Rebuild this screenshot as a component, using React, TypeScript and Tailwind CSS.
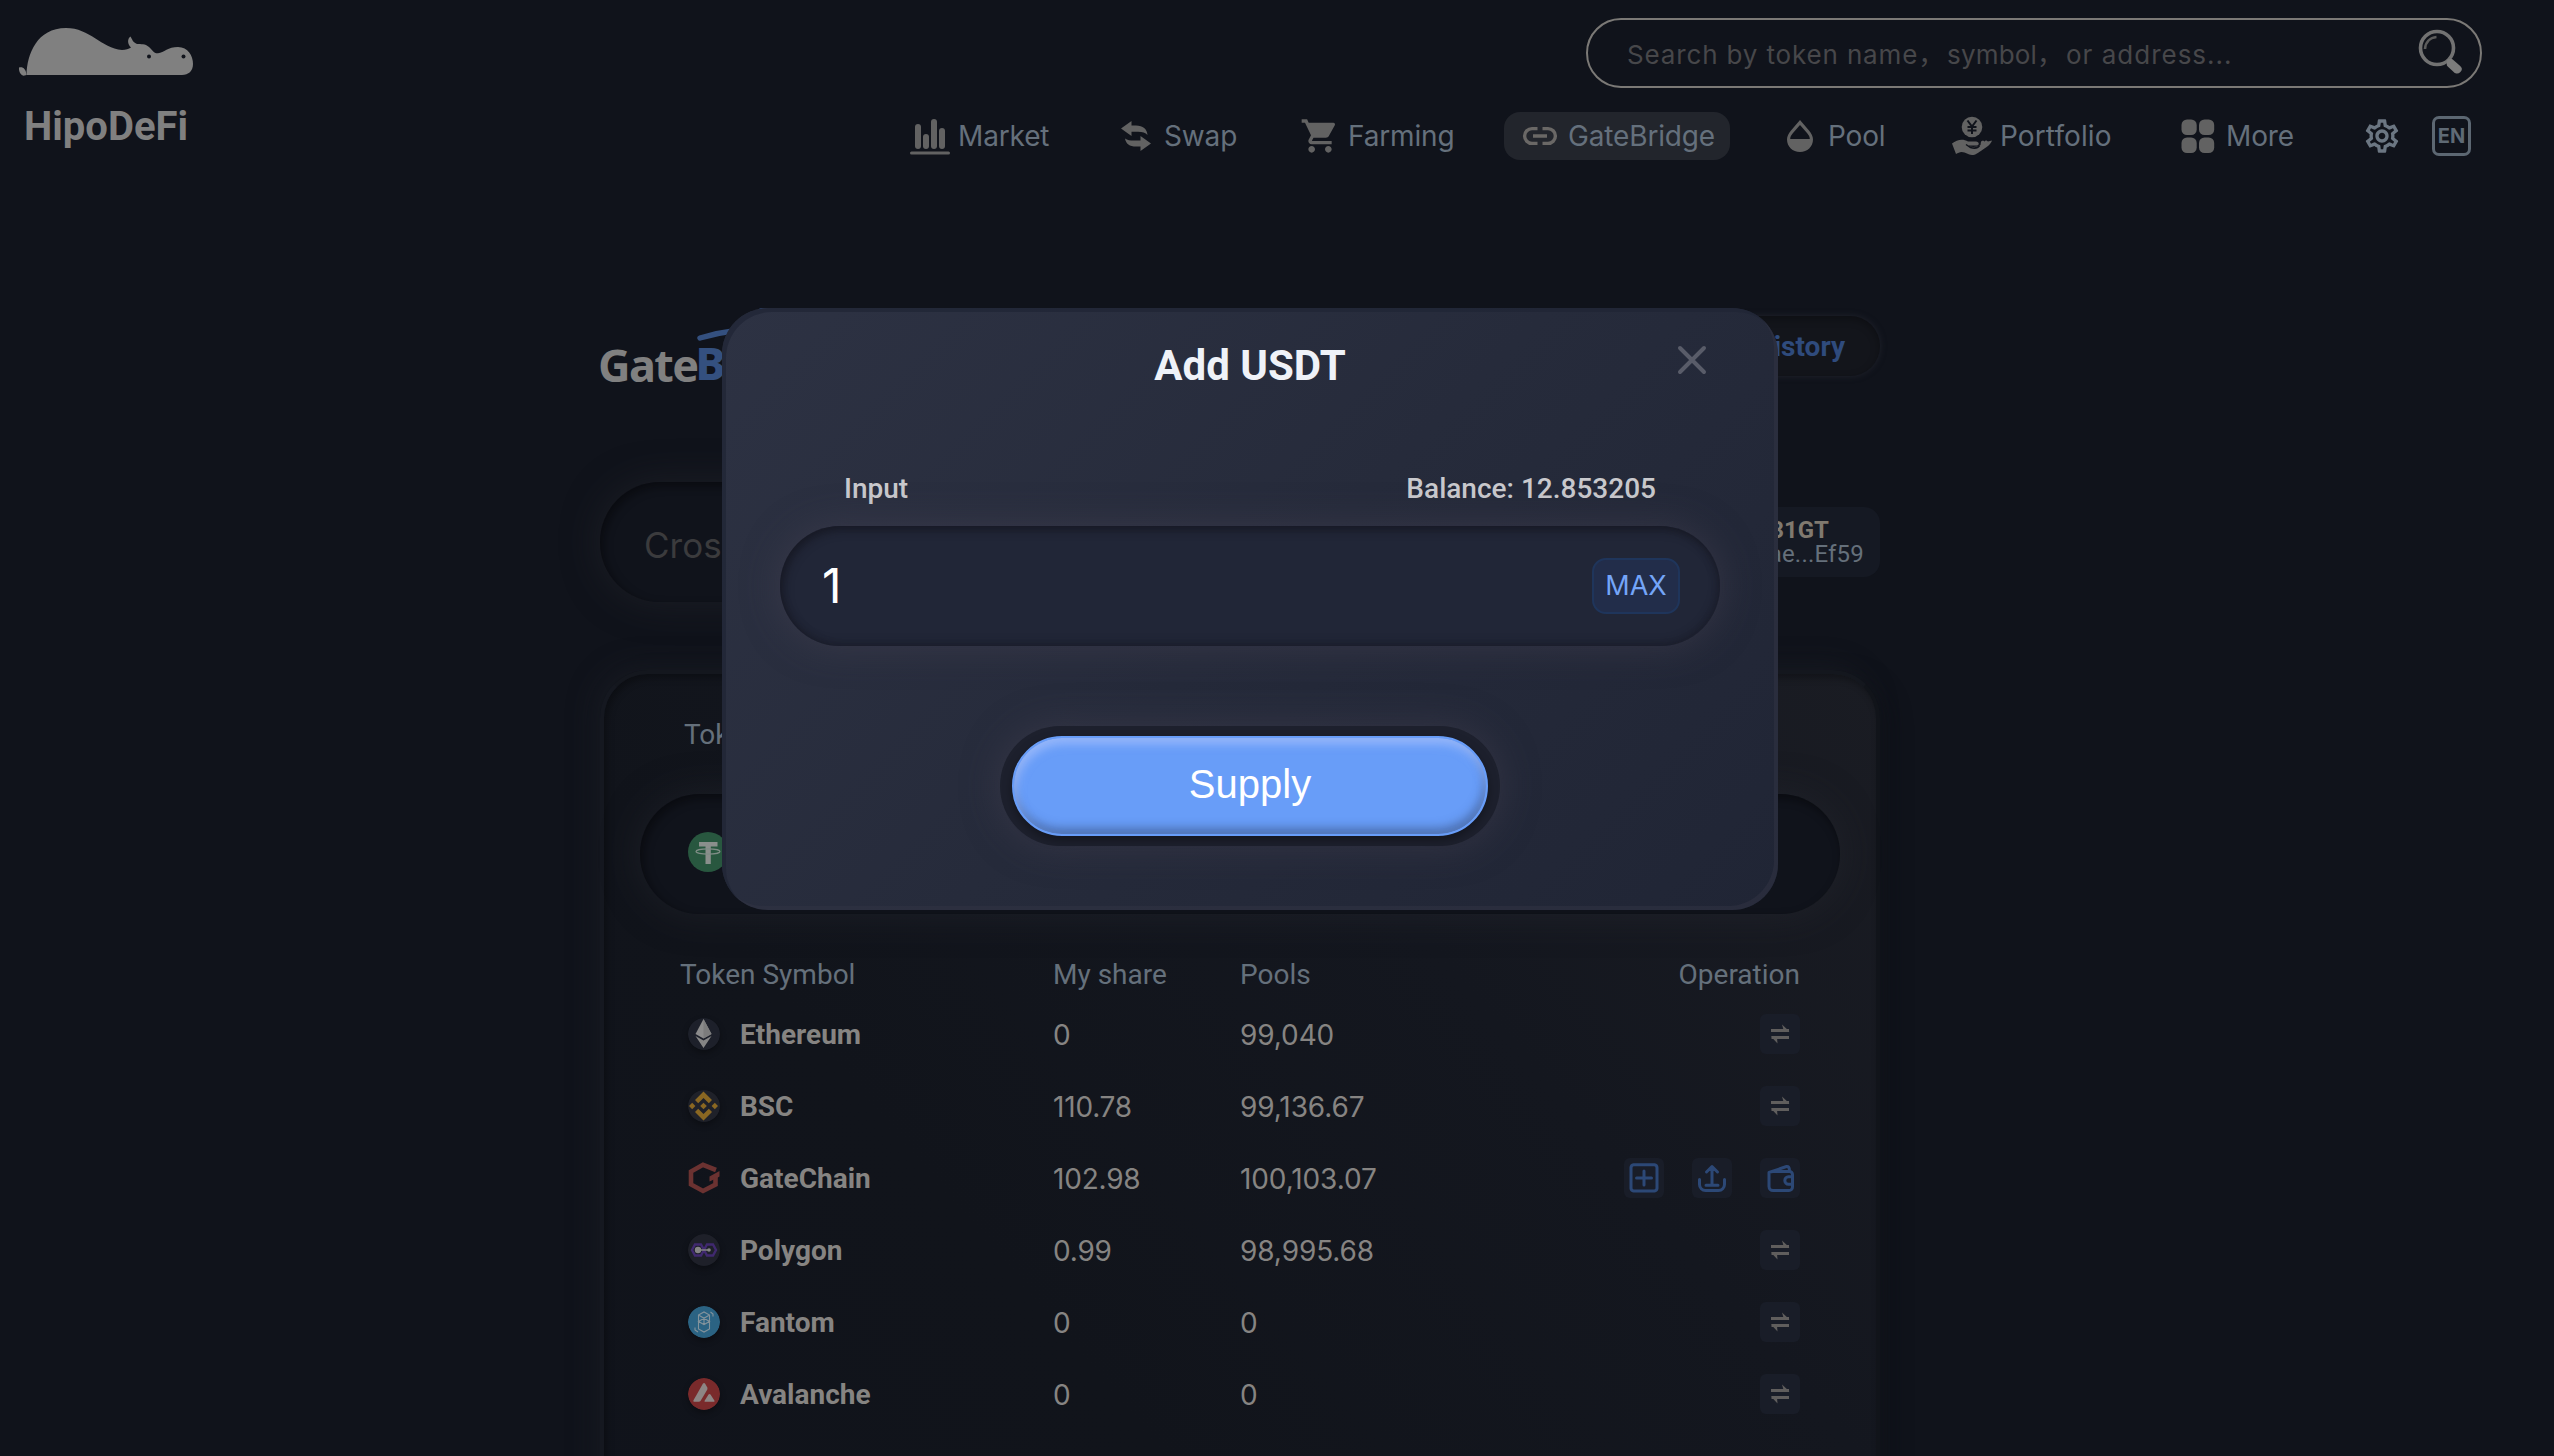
import React from "react";
import { MdShoppingCart, MdOutlineSettings } from "react-icons/md";

const INTER = "font-['Inter','Noto_Sans_CJK_SC',sans-serif]";
const ARIAL = "font-['Liberation_Sans',sans-serif]";

/* ---------- brand ---------- */

function HippoLogo() {
  return (
    <svg className="block h-[50px] w-[176px]" viewBox="18 27 176 50" fill="#808080">
      <path d="M26.5 75C27 54 37 28 66 28C90 28 101 48 122 50C126 50 128.500 49 131 47.500C127.500 44 127 39 130.500 36.500C132 39 133 42.500 137 44C141 44.300 145 43.500 149 47C152 49.500 153.500 53.500 158 53.300C164 52.500 168 47 178 47C188 47 193 56 193 64C193 71 188.500 75 182 75Z" />
      <path d="M19 67.500C22.500 66.300 26 68.500 26.500 75L23.500 75.800C20 74.500 18.700 71 19 67.500Z" />
      <circle cx="149" cy="56.600" r="2" fill="#10131b" />
      <circle cx="183.500" cy="56.600" r="2" fill="#10131b" />
    </svg>
  );
}

function GateBridgeLogo() {
  return (
    <div className="relative h-[78px] w-[260px]">
      <div className="flex items-start pt-[19px] font-['Noto_Sans',sans-serif] text-[45px] font-bold leading-[60px] text-[#808080]">
        <span className="-ml-[2px] w-[99.500px] tracking-[-1.600px]">Gate</span>
        <span className="-mt-[2px] -ml-[2px] font-extrabold tracking-[-1.600px] text-[#34507f]">Bridge</span>
      </div>
      <svg className="absolute left-[90px] -top-4 h-[48px] w-[140px]" viewBox="690 300 140 48" fill="none" stroke="#34507f" strokeWidth="5.500" strokeLinecap="round">
        <path d="M700 338Q716 333 733 331M761 311H768" />
      </svg>
    </div>
  );
}

/* ---------- navigation icons ---------- */

const NAV_ICON = "block h-10 w-10 shrink-0";

const MarketIcon = () => (
  <svg className={NAV_ICON} viewBox="0 0 40 40" fill="#626262">
    <rect x="5" y="8" width="6" height="25" rx="3" />
    <rect x="13" y="18" width="6" height="15" rx="3" />
    <rect x="21" y="3" width="6" height="30" rx="3" />
    <rect x="29" y="12" width="6" height="21" rx="3" />
    <rect x="0" y="35.500" width="40" height="3" rx="1.500" />
  </svg>
);

const SwapIcon = () => (
  <svg className={NAV_ICON} viewBox="0 0 40 40" fill="#626262">
    <path d="M5 12.500L15.500 5V9.500H20C27 9.500 31 13 31.500 19C29.500 16.500 26.500 15.800 22 15.800H15.500V20Z" />
    <path d="M35 27.500L24.500 35V30.500H20C13.500 30.500 10 28 9 22.500C11.500 24.300 14 24.500 18 24.500H24.500V20Z" />
  </svg>
);

const FarmingIcon = () => <MdShoppingCart className={NAV_ICON} color="#626262" />;

const BridgeIcon = () => (
  <svg className={NAV_ICON} viewBox="0 0 40 40" fill="none" stroke="#6a6866" strokeWidth="3.400">
    <path d="M17.500 12.600H12A7.400 7.400 0 0 0 12 27.400H17.500M22.500 12.600H28A7.400 7.400 0 0 1 28 27.400H22.500M13 20H27" />
  </svg>
);

const PoolIcon = () => (
  <svg className={NAV_ICON} viewBox="0 0 40 40">
    <path fillRule="evenodd" fill="#626262" d="M20 4L29 14.500C31.500 17.500 33 20.300 33 23.500C33 30.500 27.300 36 20 36S7 30.500 7 23.500C7 20.300 8.500 17.500 11 14.500ZM20 9L13 17C11 19.300 10.300 21 10.200 23H29.800C29.700 21 29 19.300 27 17Z" />
  </svg>
);

const PortfolioIcon = () => (
  <svg className={NAV_ICON} viewBox="0 0 40 40">
    <circle cx="20" cy="11" r="10.300" fill="#626262" />
    <path d="M15.500 4.500L20 10.500L24.500 4.500M20 10.500V18M15.500 11H24.500M15.500 14.500H24.500" stroke="#10131b" strokeWidth="2" fill="none" />
    <path fill="#626262" d="M0 27.500C5 23.500 11 22.500 16 25.500H24C27.500 26 27.500 29 25 29.500H17V30.500C21 31.500 26 31 28.500 29L29 25.500L31 24.500L32.500 25.500L34 24.300L36 25.500L40 24.500C39 28 35 31 31 33.500C26 37 23.500 39 20 39C16 39 14 36 9.500 36C7.500 36 6 37 4 38Z" />
    <path d="M14 28.500L18.500 31.500C22 32.500 26 32 27.500 29.500" stroke="#10131b" strokeWidth="1.500" fill="none" />
  </svg>
);

const MoreIcon = () => (
  <svg className={NAV_ICON} viewBox="0 0 40 40" fill="#626262">
    <rect x="3.500" y="3.500" width="15.200" height="15.500" rx="5.500" />
    <rect x="21" y="3.500" width="15.200" height="15.500" rx="5.500" />
    <rect x="3.500" y="21.500" width="15.200" height="15.500" rx="5.500" />
    <rect x="21" y="21.500" width="15.200" height="15.500" rx="5.500" />
  </svg>
);

const NAV = [
  { label: "Market", Icon: MarketIcon, box: "w-[170px]" },
  { label: "Swap", Icon: SwapIcon, box: "w-[148px]" },
  { label: "Farming", Icon: FarmingIcon, box: "w-[184px]" },
  { label: "GateBridge", Icon: BridgeIcon, box: "w-[226px] -mr-[2px] bg-[#22252c]" },
  { label: "Pool", Icon: PoolIcon, box: "w-[136px]" },
  { label: "Portfolio", Icon: PortfolioIcon, box: "w-[190px] tracking-[0.100px]" },
  { label: "More", Icon: MoreIcon, box: "w-[146px]" },
];

function Header() {
  return (
    <header className="flex h-[300px] items-start justify-between pl-[18px] pr-[72px]">
      <div className="pt-[27px]">
        <HippoLogo />
        <div className="mt-6 pl-[6px] text-[40px] font-bold leading-[52px] text-[#808080]">HipoDeFi</div>
      </div>
      <div className="flex flex-col items-end pt-[18px]">
        <div className={`flex h-[70px] w-[896px] items-center rounded-full border-2 border-[#7b7976] pl-[39px] pr-[17px] ${INTER}`}>
          <div className="flex flex-1 pt-[3px] text-[26px] leading-9 text-[#47474a]">
            <span className="w-[320px] tracking-[0.850px]">Search by token name，</span>
            <span className="w-[119px] tracking-[0.200px]">symbol，</span>
            <span className="tracking-[1px]">or address...</span>
          </div>
          <svg className="-mt-1 block h-[46px] w-[46px]" viewBox="0 0 46 46" fill="none">
            <circle cx="20" cy="20" r="16.500" stroke="#727272" strokeWidth="3.600" />
            <path d="M8 21C8.500 14 13 9.500 19.500 9" stroke="#5c5c5c" strokeWidth="2.600" />
            <path d="M32 33.500L34 33L42 40C43.500 41.500 41 44 39 43L32 36.500Z" stroke="#7c7c7c" strokeWidth="4.500" strokeLinejoin="round" fill="#7c7c7c" />
          </svg>
        </div>
        <nav className={`mt-6 flex items-center text-[28px] leading-[46px] text-[#65707c] ${INTER}`}>
          <div className="mr-[54px] flex gap-9 tracking-[-0.150px]">
            {NAV.map(({ label, Icon, box }) => (
              <div key={label} className={`flex h-12 items-center gap-2 rounded-2xl pl-4 ${box}`}>
                <Icon />
                <span>{label}</span>
              </div>
            ))}
          </div>
          <MdOutlineSettings className="h-[40px] w-[40px]" color="#6b7682" />
          <div className="ml-[30px] mr-[11px] flex h-[40px] w-[39px] items-center justify-center rounded-[7px] border-[3.500px] border-[#5c6772] text-[20px] font-bold leading-none text-[#5f6a75]">EN</div>
        </nav>
      </div>
    </header>
  );
}

/* ---------- token icons ---------- */

const COIN = "block h-8 w-8 shrink-0 rounded-full shadow-[0_3px_6px_rgba(0,0,0,0.300)]";

const Ethereum = () => (
  <svg className={COIN} viewBox="0 0 32 32">
    <circle cx="16" cy="16" r="16" fill="#1d202a" />
    <path d="M15.500 1L7.500 16L15.500 20.500L23.500 16Z" fill="#8b8b8b" />
    <path d="M15.500 1V20.500L23.500 16Z" fill="#7c7c7c" />
    <path d="M7.500 18L15.500 22.500L23.500 18L15.500 30Z" fill="#858585" />
  </svg>
);
const Bsc = () => (
  <svg className={COIN} viewBox="0 0 32 32">
    <circle cx="16" cy="16" r="16" fill="#1f2129" />
    <g fill="#8a6722">
      <path d="M15.500 1.500L24 10L20.800 13.200L15.500 8L10.200 13.200L7 10Z" />
      <path d="M15.500 30.500L24 22L20.800 18.800L15.500 24L10.200 18.800L7 22Z" />
      <path d="M15.500 12.700L18.800 16L15.500 19.300L12.200 16Z" />
      <path d="M4.200 12.800L7.400 16L4.200 19.200L1 16Z" />
      <path d="M26.800 12.800L30 16L26.800 19.200L23.600 16Z" />
    </g>
  </svg>
);
const GateChain = () => (
  <svg className="block h-8 w-8 shrink-0" viewBox="0 0 32 32" fill="none" stroke="#6b3231" strokeWidth="4.600">
    <path d="M28 8L15 2.800L3 9.500V22.500L15 29L27.500 22.500V13.500" />
    <path d="M21.500 14.500L31.500 9V14.500L27 17L21.500 19.500Z" fill="#6b3231" stroke="none" />
  </svg>
);
const Polygon = () => (
  <svg className={COIN} viewBox="0 0 32 32" fill="none">
    <circle cx="16" cy="16" r="16" fill="#1e2029" />
    <path d="M7 10.500H13L16 16L13 21.500H7L4 16ZM19 10.500H25L28 16L25 21.500H19L16 16Z" stroke="#40296f" strokeWidth="2.400" />
    <circle cx="10" cy="16" r="3.200" fill="#858585" />
    <path d="M10 16H20" stroke="#858585" strokeWidth="1.300" />
    <circle cx="21" cy="16" r="1.800" fill="#858585" />
  </svg>
);
const Fantom = () => (
  <svg className={COIN} viewBox="0 0 32 32" fill="none">
    <circle cx="16" cy="16" r="16" fill="#2b6383" />
    <path d="M10.500 9L16 6L21.500 9V23L16 26L10.500 23ZM10.500 9L21.500 15.500L16 18.500L10.500 15.500L21.500 9M16 12V18.500M10.500 15.500V20M21.500 15.500V20M22.500 6L25 8V10.500M7 21.500V24L10 26" stroke="#83939c" strokeWidth="1.100" />
  </svg>
);
const Avalanche = () => (
  <svg className={COIN} viewBox="0 0 32 32">
    <circle cx="16" cy="16" r="16" fill="#7a2a2b" />
    <path d="M15 5.500C15.700 4.800 16.500 4.800 17 5.500L19.300 9.500C19.600 10.300 19.500 11 19.200 11.700L12.500 23C12 23.600 11.500 23.800 10.800 23.800H6C5.300 23.600 5.200 23 5.500 22.300Z" fill="#8d8584" />
    <path d="M20.500 16.500C21 15.700 22 15.700 22.500 16.500L26.500 22.800C26.700 23.400 26.300 23.800 25.700 23.800H17.300C16.700 23.800 16.300 23.400 16.600 22.800Z" fill="#8d8584" />
  </svg>
);
const Tether = () => (
  <svg className="-mt-1 block h-10 w-10 shrink-0" viewBox="0 0 40 40">
    <circle cx="20" cy="20" r="20" fill="#28573f" />
    <path d="M11 10H29.500V14.500H22.800V32H17.500V14.500H11Z" fill="#8a8f8c" />
    <ellipse cx="20" cy="19.500" rx="12" ry="2.600" fill="none" stroke="#7f8d86" strokeWidth="1.200" />
  </svg>
);

/* ---------- operations ---------- */

function OpButton({ children }: { children: React.ReactNode }) {
  return <span className="flex h-10 w-10 items-center justify-center rounded-md bg-[#191d28]">{children}</span>;
}
const SwapOp = () => (
  <OpButton>
    <svg className="block h-10 w-10" viewBox="0 0 40 40" fill="none" stroke="#605e5d" strokeWidth="2.800">
      <path d="M11 16.500H29M29 23.500H11.500" />
      <path d="M22 10.500L29.500 17.500H24ZM11 22.500L17.500 29.500L17 23.500Z" fill="#605e5d" stroke="none" />
    </svg>
  </OpButton>
);
const BlueOp = ({ d }: { d: string }) => (
  <OpButton>
    <svg className="block h-10 w-10" viewBox="0 0 40 40" fill="none" stroke="#2c4876" strokeWidth="3" strokeLinecap="round" strokeLinejoin="round">
      <path d={d} />
    </svg>
  </OpButton>
);

const ROWS = [
  { name: "Ethereum", share: "0", pools: "99,040", Icon: Ethereum },
  { name: "BSC", share: "110.78", pools: "99,136.67", Icon: Bsc },
  { name: "GateChain", share: "102.98", pools: "100,103.07", Icon: GateChain, own: true },
  { name: "Polygon", share: "0.99", pools: "98,995.68", Icon: Polygon },
  { name: "Fantom", share: "0", pools: "0", Icon: Fantom },
  { name: "Avalanche", share: "0", pools: "0", Icon: Avalanche },
];

const GRID = "grid grid-cols-[373px_187px_1fr_auto] items-center";

function BridgePage() {
  return (
    <main className="ml-[600px] w-[1280px]">
      <div className="mt-4 flex h-[60px] items-start justify-between">
        <GateBridgeLogo />
        <div className="flex h-[60px] items-center rounded-full bg-[#13151b] px-[35px] text-[28px] font-bold text-[#2f4b7d] shadow-[inset_0_3px_8px_rgba(0,0,0,0.300),0_0_6px_rgba(40,43,52,0.700)]">
          <span className="pt-px">History</span>
        </div>
      </div>

      <div className="mt-[106px] flex h-[120px] items-center justify-between">
        <div className={`flex h-[120px] w-[900px] items-center rounded-full bg-[#10131b] pl-11 pt-[6px] text-[35px] text-[#3b3b3d] shadow-[inset_3px_4px_8px_rgba(4,4,6,0.500),0_0_36px_rgba(38,40,46,0.550)] ${INTER}`}>
          Cross
        </div>
        <div className="-mt-px flex h-[70px] flex-col items-end justify-center rounded-2xl bg-[#151923] pl-5 pr-[16px] text-[24px] leading-6">
          <span className="mr-[35px] font-bold text-[#80796f]">0.8831GT</span>
          <span className="tracking-[0.200px] text-[#65707b]">0x94ae...Ef59</span>
        </div>
      </div>

      <section className="mt-[68px] h-[1000px] rounded-[48px] border-4 border-b-0 border-l-[#151820] border-r-[#11141a] border-t-[#14171e] bg-[linear-gradient(50deg,#10131b_0%,#11141b_35%,#14171f_68%,#1a1c23_100%)] pt-10 shadow-[-8px_-6px_26px_rgba(32,35,43,0.400),10px_6px_22px_rgba(13,15,20,0.400),inset_3px_4px_7px_rgba(0,0,0,0.300)]">
        <div className="pl-[80px] pt-[2px] text-[28px] leading-[38px] text-[#65707b]">Token</div>
        <div className="mx-9 mt-10 flex h-[120px] items-center gap-5 rounded-full bg-[#10131b] pl-12 text-[28px] font-bold text-[#808080] shadow-[inset_3px_4px_8px_rgba(4,4,6,0.500),0_0_36px_rgba(40,42,49,0.500)]">
          <Tether />
          USDT
        </div>
        <div className="mx-[76px] mt-9 text-[28px] text-[#868482]">
          <div className={`h-12 pt-px text-[#65707b] ${GRID}`}>
            <span>Token Symbol</span>
            <span>My share</span>
            <span>Pools</span>
            <span>Operation</span>
          </div>
          {ROWS.map(({ name, share, pools, Icon, own }) => (
            <div key={name} className={`h-[72px] ${GRID}`}>
              <span className="flex items-center gap-5 pl-2">
                <Icon />
                <b className="pt-[2px] font-bold">{name}</b>
              </span>
              <span className={`pt-px tracking-[-0.200px] ${INTER}`}>{share}</span>
              <span className={`pt-px tracking-[-0.100px] ${INTER}`}>{pools}</span>
              <span className="flex gap-7">
                {own ? (
                  <>
                    <BlueOp d="M9.500 6.800H30.500A3 3 0 0 1 33 9.500V30.500A3 3 0 0 1 30.500 33H9.500A3 3 0 0 1 7 30.500V9.500A3 3 0 0 1 9.500 6.800ZM20 13V27M12.500 20H27.500" />
                    <BlueOp d="M7.500 21.500V26.500A6 6 0 0 0 13.500 32.500H26.500A6 6 0 0 0 32.500 26.500V21.500M14 27.300H26M20 27V8.500M14.500 14L20 8.500L25.500 14" />
                    <BlueOp d="M13 13.500H29.500A3 3 0 0 1 32.500 16.500V29A3.500 3.500 0 0 1 29 32.500H13A4 4 0 0 1 9 28.500V14.500L26.500 8.500Q29.300 8 29.500 12.500M9 15Q9.500 13.500 13 13.500M32.500 18.800H28.500A3.600 3.600 0 0 0 28.500 26.200H32.500" />
                  </>
                ) : (
                  <SwapOp />
                )}
              </span>
            </div>
          ))}
        </div>
      </section>
    </main>
  );
}

/* ---------- modal ---------- */

function AddModal() {
  return (
    <div className="absolute left-[722px] top-[308px] flex h-[602px] w-[1056px] flex-col rounded-[46px] bg-[linear-gradient(135deg,#2d3243_0%,#262b3b_50%,#202535_100%)] px-[58px] shadow-[inset_4px_4px_0_rgba(32,37,54,0.750),inset_-4px_-4px_0_rgba(50,52,68,0.500)]">
      <h2 className="mt-[28px] text-center text-[42px] font-bold leading-[60px] text-[#eff2f8]">Add USDT</h2>
      <svg className="absolute right-[70px] top-[36px] h-8 w-8" viewBox="0 0 32 32" stroke="#595c69" strokeWidth="4" strokeLinecap="round">
        <path d="M4 4L28 28M28 4L4 28" />
      </svg>
      <div className="mt-[75px] flex justify-between pl-[64px] pr-[64px] text-[28px] font-medium leading-9 text-[#c9c9cd]">
        <span>Input</span>
        <span>Balance: 12.853205</span>
      </div>
      <div className={`mt-[19px] flex h-[120px] items-center justify-between rounded-full bg-[#212637] pl-[42px] pr-10 shadow-[inset_3px_4px_10px_rgba(16,16,24,0.550),inset_-2px_-3px_8px_rgba(20,20,28,0.350),0_0_36px_rgba(70,66,82,0.550)] ${INTER}`}>
        <span className="text-[48px] leading-none text-white">1</span>
        <span className="flex h-14 w-[88px] items-center justify-center rounded-[14px] border-2 border-[#1f355b] bg-[#222d4a] pt-px text-[27px] text-[#74a5f8]">MAX</span>
      </div>
      <div className="mt-20 flex h-[120px] w-[500px] items-center justify-center self-center rounded-full bg-[#1d202d] shadow-[0_0_36px_rgba(70,66,82,0.500)]">
        <div className={`flex h-[100px] w-[476px] items-center justify-center rounded-full border-2 border-[#689df8] bg-[#689df8] text-[40px] text-white shadow-[inset_2px_6px_10px_rgba(190,205,255,0.550),inset_-2px_-6px_10px_rgba(50,70,110,0.500),0_4px_10px_rgba(0,0,0,0.350)] ${ARIAL}`}>
          <span className="-mt-[5px]">Supply</span>
        </div>
      </div>
    </div>
  );
}

export default function App() {
  return (
    <div className="relative h-[1456px] w-[2554px] overflow-hidden bg-[#10131b] font-['Roboto',sans-serif]">
      <Header />
      <BridgePage />
      <AddModal />
    </div>
  );
}
